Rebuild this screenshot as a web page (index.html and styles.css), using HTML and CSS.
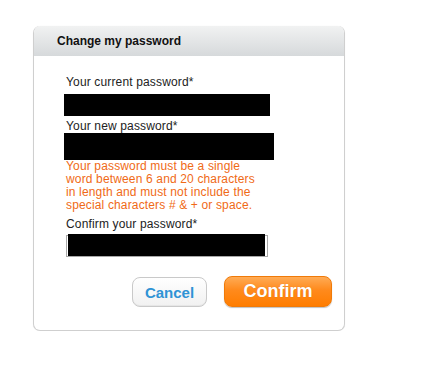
FILE: index.html
```html
<!DOCTYPE html>
<html>
<head>
<meta charset="utf-8">
<link rel="stylesheet" href="styles.css">
</head>
<body>
<div class="dialog">
  <div class="dialog-header">Change my password</div>
  <div class="dialog-body">
    <div class="label">Your current password*</div>
    <div class="field field-1"></div>
    <div class="label label-new">Your new password*</div>
    <div class="field field-2"></div>
    <div class="hint">Your password must be a single<br>word between 6 and 20 characters<br>in length and must not include the<br>special characters # &amp; + or space.</div>
    <div class="label label-confirm">Confirm your password*</div>
    <div class="field-3"><div class="field-3-fill"></div></div>
    <div class="actions">
      <button class="btn btn-cancel">Cancel</button>
      <button class="btn btn-confirm">Confirm</button>
    </div>
  </div>
</div>
</body>
</html>
```

FILE: styles.css
```css
html, body {
  margin: 0;
  padding: 0;
  background: #ffffff;
}

body {
  padding: 26px 0 0 33px;
  font-family: "Liberation Sans", Arial, sans-serif;
  font-size: 12px;
  color: #222;
}

.dialog {
  box-sizing: border-box;
  width: 312px;
  height: 305px;
  border: 1px solid #cfcfcf;
  border-top: none;
  border-radius: 7px;
  box-shadow: 0 0 1px rgba(0,0,0,0.08);
  background: #fff;
  overflow: hidden;
}

.dialog-header {
  height: 30px;
  line-height: 30px;
  padding-left: 24px;
  font-weight: bold;
  font-size: 12px;
  color: #111;
  background: linear-gradient(#f1f2f2, #d6d9db);
  margin: 0 -1px;
  border-radius: 7px 7px 0 0;
}

.dialog-body {
  padding: 19px 12px 0 30px;
  display: flex;
  flex-direction: column;
  align-items: flex-start;
  letter-spacing: 0.15px;
}

.label {
  line-height: 14px;
  padding-left: 2px;
  color: #222;
}

.label-new {
  margin-top: 3px;
}

.label-confirm {
  margin-top: 5px;
}

.field {
  background: #000;
}

.field-1 {
  width: 206px;
  height: 22px;
  margin-top: 5px;
}

.field-2 {
  width: 210px;
  height: 27px;
}

.hint {
  padding-left: 2px;
  line-height: 13px;
  color: #f06a16;
}

.field-3 {
  box-sizing: border-box;
  margin: 4px 0 0 2px;
  width: 202px;
  height: 22px;
  border: 1px solid #a8a8a8;
}

.field-3-fill {
  margin: -2px 0 0 1px;
  width: 197px;
  height: 22px;
  background: #000;
}

.actions {
  align-self: stretch;
  display: flex;
  justify-content: flex-end;
  align-items: flex-end;
  gap: 17px;
  margin-top: 19px;
  letter-spacing: 0;
}

.btn {
  font-family: "Liberation Sans", Arial, sans-serif;
  font-weight: bold;
  cursor: pointer;
  padding: 0;
  box-sizing: border-box;
}

.btn-cancel {
  width: 75px;
  height: 30px;
  font-size: 15px;
  color: #2f93d5;
  background: linear-gradient(#ffffff, #f1f1f1);
  border: 1px solid #c9c9c9;
  border-radius: 8px;
  box-shadow: inset 0 -1px 0 #e6e6e6;
}

.btn-confirm {
  width: 108px;
  height: 31px;
  font-size: 18px;
  color: #fff;
  background: linear-gradient(#ffab55 0%, #ff8a1c 45%, #ff7d00 100%);
  border: 1px solid #f07a08;
  border-radius: 8px;
  box-shadow: 0 1px 1px rgba(0,0,0,0.25);
  text-shadow: 0 0 1px rgba(150,60,0,0.3);
}
```
